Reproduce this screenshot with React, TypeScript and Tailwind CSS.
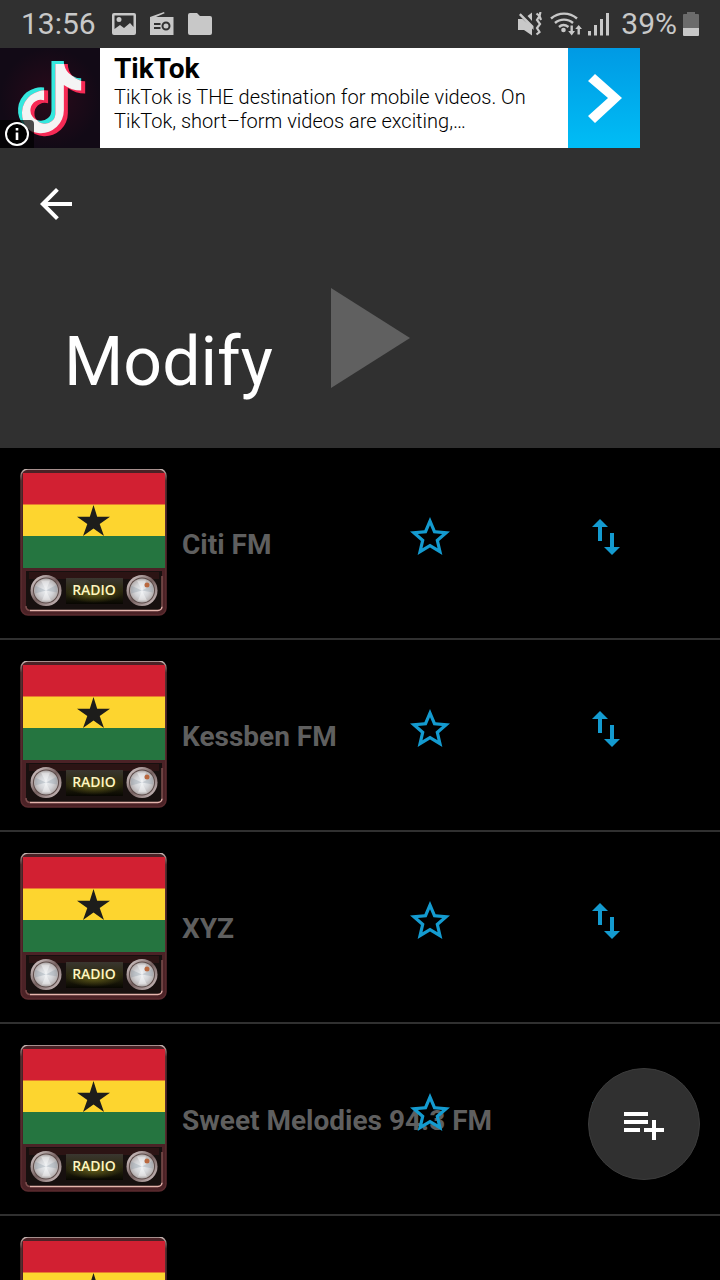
type Station = {
  id: number;
  name: string;
};

const stations: Station[] = [
  { id: 1, name: 'Citi FM' },
  { id: 2, name: 'Kessben FM' },
  { id: 3, name: 'XYZ' },
  { id: 4, name: 'Sweet Melodies 94.3 FM' },
  { id: 5, name: '' },
];

const NOTE =
  'M448,209.91a210.06,210.06,0,0,1-122.77-39.25V349.38A162.55,162.55,0,1,1,185,188.31V278.2a74.62,74.62,0,1,0,52.23,71.18V0l88,0a121.18,121.18,0,0,0,1.86,22.17h0A122.18,122.18,0,0,0,381,102.39a121.43,121.43,0,0,0,67,20.14Z';

function Icon({ path, className = 'size-12' }: { path: string; className?: string }) {
  return (
    <svg viewBox="0 0 24 24" fill="currentColor" className={className} aria-hidden="true">
      <path d={path} />
    </svg>
  );
}

function StatusBar() {
  return (
    <div className="flex h-12 shrink-0 items-center justify-between px-[21px] text-[30px] leading-12 text-[#c8c8c8]">
      <div className="flex items-center">
        <span>13:56</span>
        <svg viewBox="0 0 104 24" className="ml-4 h-6 w-26" fill="currentColor" aria-hidden="true">
          {/* gallery */}
          <path
            fillRule="evenodd"
            d="M2 1h20a2 2 0 0 1 2 2v18a2 2 0 0 1-2 2H2a2 2 0 0 1-2-2V3a2 2 0 0 1 2-2zM2.500 3.500V17l5.500-4 4 3 6-5 3.500 4V3.500zM7 5a2.500 2.500 0 1 1 0 5 2.500 2.500 0 0 1 0-5z"
          />
          {/* radio */}
          <path
            fillRule="evenodd"
            d="M38 5 52 0l.6 1.300L44 5h17.500v18H38zM42 11v2h6.500v-2zM42 15v2h6.500v-2zM54 9.500a4.500 4.500 0 1 0 0 9 4.500 4.500 0 0 0 0-9zM54 11.500a2.500 2.500 0 1 1 0 5 2.500 2.500 0 0 1 0-5z"
          />
          {/* folder */}
          <path d="M78 1h7l3 3h10a2 2 0 0 1 2 2v15a2 2 0 0 1-2 2H78a2 2 0 0 1-2-2V3a2 2 0 0 1 2-2z" />
        </svg>
      </div>
      <div className="flex items-center">
        <svg viewBox="0 0 96 24" className="mr-2 h-6 w-24" fill="currentColor" aria-hidden="true">
          {/* muted, vibrating */}
          <path d="M1 7h4.500L15 16v7.500L7 18H1zM10.500 4 15 .5V9zM2 3l1.700-1.700L16.500 14v4z" />
          <path
            d="M19.500 1.500 22.500 4 20 8l3 4-3 4 2.500 4-3 2.500M23.500 0 22.500 4 24 8"
            fill="none"
            stroke="currentColor"
            strokeWidth="2.200"
          />
          {/* wifi */}
          <g fill="none" stroke="currentColor" strokeWidth="2.400">
            <path d="M34 6.500c7.500-6.500 18.500-6.500 26 0M38 11c5-4.500 13-4.500 18 0M42 15c3-2.700 6-2.700 9.500 0" />
          </g>
          <circle cx="46.500" cy="18" r="2.300" />
          <path d="M53.500 13.500h2.400v5.500H58l-3.300 4.500-3.500-4.500h2.300zM60.500 22.500h2.400V17H65l-3.300-4-3.500 4h2.300z" />
          {/* signal */}
          <path d="M71 19h3v4.500h-3zM77 13h3v10.500h-3zM83 7h3v16.500h-3zM89 1h3v22.500h-3z" />
        </svg>
        <span>39%</span>
        <svg viewBox="0 0 16 24" className="ml-1.5 h-6 w-4" aria-hidden="true">
          <path d="M4 0h8v2h3a1 1 0 0 1 1 1v13H0V3a1 1 0 0 1 1-1h3z" fill="#6b6b6b" />
          <path d="M0 16h16v7a1 1 0 0 1-1 1H1a1 1 0 0 1-1-1z" fill="#c8c8c8" />
        </svg>
      </div>
    </div>
  );
}

function AdBanner() {
  return (
    <a href="#" className="flex h-25 w-full max-w-160 shrink-0 bg-white text-black">
      <svg viewBox="0 0 100 100" className="size-25 shrink-0" aria-hidden="true">
        <defs>
          <radialGradient id="adBg">
            <stop offset="0" stopColor="#2a0a1a" />
            <stop offset="1" stopColor="#120a16" />
          </radialGradient>
          <clipPath id="redNote">
            <path d={NOTE} transform="translate(22 16) scale(.141)" />
          </clipPath>
        </defs>
        <rect width="100" height="100" fill="url(#adBg)" />
        <path d={NOTE} transform="translate(18 13) scale(.141)" fill="#35e8de" />
        <path d={NOTE} transform="translate(22 16) scale(.141)" fill="#f62a55" />
        <g clipPath="url(#redNote)">
          <path d={NOTE} transform="translate(18 13) scale(.141)" fill="#f4f4f4" />
        </g>
        <path d="M0 72h30a4 4 0 0 1 4 4v24H0z" fill="#000" fillOpacity=".7" />
        <circle cx="17" cy="86" r="11" fill="#000" stroke="#fff" strokeWidth="2" />
        <path d="M15.700 80h2.600v2.600h-2.600zM15.700 84.500h2.600V92h-2.600z" fill="#fff" />
      </svg>
      <div className="min-w-0 flex-1 pl-3.5 pt-[5px]">
        <p className="text-[28px] leading-8 font-bold">TikTok</p>
        <p className="text-xl leading-6 font-light">
          TikTok is THE destination for mobile videos. On TikTok, short–form videos are exciting,…
        </p>
      </div>
      <div className="w-18 shrink-0 bg-linear-to-b from-[#009ae4] to-[#00bdf5]">
        <svg viewBox="0 0 72 100" className="h-25 w-18" aria-hidden="true">
          <path d="M27 26 54 50 27 75 20 68 40 50 20 33Z" fill="#fff" />
        </svg>
      </div>
    </a>
  );
}

function Knob({ cx, marked = false }: { cx: number; marked?: boolean }) {
  return (
    <g>
      <circle cx={cx} cy="122.500" r="15.500" fill="url(#rim)" />
      <circle cx={cx} cy="122.500" r="13" fill="#5a4a48" />
      <circle cx={cx} cy="122.500" r="12" fill="url(#knob)" />
      <path d={`M${cx} 122.500l-11-5v8zM${cx} 122.500l11-6v8z`} fill="#8d9aa6" fillOpacity=".35" />
      <path d={`M${cx} 122.500l-5-10h9zM${cx} 122.500l-4 10h9z`} fill="#fff" fillOpacity=".4" />
      {marked && <circle cx={cx + 5} cy="117" r="2.500" fill="#b9683f" />}
    </g>
  );
}

function StationLogo() {
  return (
    <svg viewBox="0 1 148 148" className="size-37" aria-hidden="true">
      <defs>
        <linearGradient id="rim" x1="0" y1="0" x2="1" y2="1">
          <stop offset="0" stopColor="#e6dcdc" />
          <stop offset=".5" stopColor="#75605f" />
          <stop offset="1" stopColor="#d8cccc" />
        </linearGradient>
        <radialGradient id="knob">
          <stop offset="0" stopColor="#eef1f4" />
          <stop offset=".6" stopColor="#d2d3d6" />
          <stop offset="1" stopColor="#b4aeae" />
        </radialGradient>
        <linearGradient id="edge" x1="0" y1="0" x2="0" y2="1">
          <stop offset="0" stopColor="#c8b8b4" />
          <stop offset=".08" stopColor="#5c3234" />
          <stop offset="1" stopColor="#5a2a2e" />
        </linearGradient>
        <linearGradient id="display" x1="0" y1="0" x2="0" y2="1">
          <stop offset="0" stopColor="#3a3630" />
          <stop offset=".5" stopColor="#2c2a10" />
          <stop offset="1" stopColor="#080702" />
        </linearGradient>
        <radialGradient id="glow">
          <stop offset="0" stopColor="#7a7420" stopOpacity=".7" />
          <stop offset="1" stopColor="#7a7420" stopOpacity="0" />
        </radialGradient>
      </defs>
      <rect x="1" y="1" width="145" height="146" rx="7" fill="#4b2226" stroke="url(#edge)" strokeWidth="1.500" />
      <path d="M3 5h142v32H3z" fill="#d22032" />
      <path d="M3 36.500h142v32H3z" fill="#fdd52f" />
      <path d="M3 68h142v32H3z" fill="#257540" />
      <path d="M73.500 37 77.200 48.800 90 48.800 79.700 56.100 84 68 73.500 60.600 63 68 67.300 56.100 57 48.800 69.800 48.800Z" fill="#1d1d1b" />
      <path d="M6 103h136v34a5 5 0 0 1-5 5H11a5 5 0 0 1-5-5z" fill="#17100f" />
      <path d="M9 104h130v7H9z" fill="#2c1414" />
      <path d="M10 142.500h128a4 4 0 0 0 4-4" fill="none" stroke="#e5b5ad" strokeWidth="1.500" />
      <path d="M6 138a4 4 0 0 0 4 4.500M142 138v-30" fill="none" stroke="#7d4f4e" strokeWidth="1.500" />
      <path d="M46 110h57v26H46z" fill="url(#display)" />
      <ellipse cx="74" cy="126" rx="28" ry="9" fill="url(#glow)" />
      <text
        x="74"
        y="127"
        textAnchor="middle"
        fill="#fff6c0"
        className="font-['Open_Sans',sans-serif] text-[14px] font-semibold"
      >
        RADIO
      </text>
      <Knob cx={26} />
      <Knob cx={122} marked />
    </svg>
  );
}

function StationRow({ station }: { station: Station }) {
  return (
    <li className="grid h-48 grid-cols-[148px_1fr_176px_176px] items-center border-b-2 border-[#303030] pl-5 pr-[26px]">
      <StationLogo />
      <span className="col-start-2 col-end-5 row-start-1 pt-1 pl-3.5 text-[28px] leading-8 font-bold text-[#5f5f5f]">
        {station.name}
      </span>
      <button
        type="button"
        aria-label="Favourite"
        className="col-start-3 row-start-1 mb-3 justify-self-center text-[#149bd0]"
      >
        <Icon path="M22 9.240l-7.190-.62L12 2 9.190 8.630 2 9.240l5.460 4.730L5.820 21 12 17.270 18.180 21l-1.630-7.030L22 9.240zM12 15.400l-3.760 2.270 1-4.280-3.320-2.880 4.380-.38L12 6.100l1.710 4.040 4.380.38-3.320 2.880 1 4.280L12 15.400z" />
      </button>
      <button
        type="button"
        aria-label="Reorder"
        className="col-start-4 row-start-1 mb-3 justify-self-center text-[#149bd0]"
      >
        <Icon path="M16 17.010V10h-2v7.010h-3L15 21l4-3.990h-3zM9 3L5 6.990h3V14h2V6.990h3L9 3z" />
      </button>
    </li>
  );
}

export default function App() {
  return (
    <div className="relative flex h-screen flex-col overflow-hidden bg-[#303030] font-['Roboto',sans-serif]">
      <StatusBar />
      <AdBanner />

      <header className="flex h-75 shrink-0 flex-col px-8 pt-8 text-white">
        <button type="button" aria-label="Back" className="self-start">
          <Icon path="M20 11H7.830l5.590-5.590L12 4l-8 8 8 8 1.410-1.410L7.830 13H20v-2z" />
        </button>
        <div className="flex pl-8 pt-15">
          <h1 className="pt-[34px] text-[68px] leading-20">Modify</h1>
          <button type="button" aria-label="Play" className="ml-[58px] self-start text-[#606060]">
            <svg viewBox="0 0 80 100" className="h-25 w-20" fill="currentColor" aria-hidden="true">
              <path d="M0 0 79 50 0 100Z" />
            </svg>
          </button>
        </div>
      </header>

      <ul className="min-h-0 flex-1 overflow-y-auto bg-black [scrollbar-width:none]">
        {stations.map((station) => (
          <StationRow key={station.id} station={station} />
        ))}
      </ul>

      <button
        type="button"
        aria-label="Add station"
        className="absolute right-5 bottom-25 flex size-28 items-center justify-center rounded-full border border-[#3c3c3c] bg-[#303030] text-white"
      >
        <Icon path="M14 10H2v2h12v-2zm0-4H2v2h12V6zm4 8v-4h-2v4h-4v2h4v4h2v-4h4v-2h-4zM2 16h8v-2H2v2z" />
      </button>
    </div>
  );
}
